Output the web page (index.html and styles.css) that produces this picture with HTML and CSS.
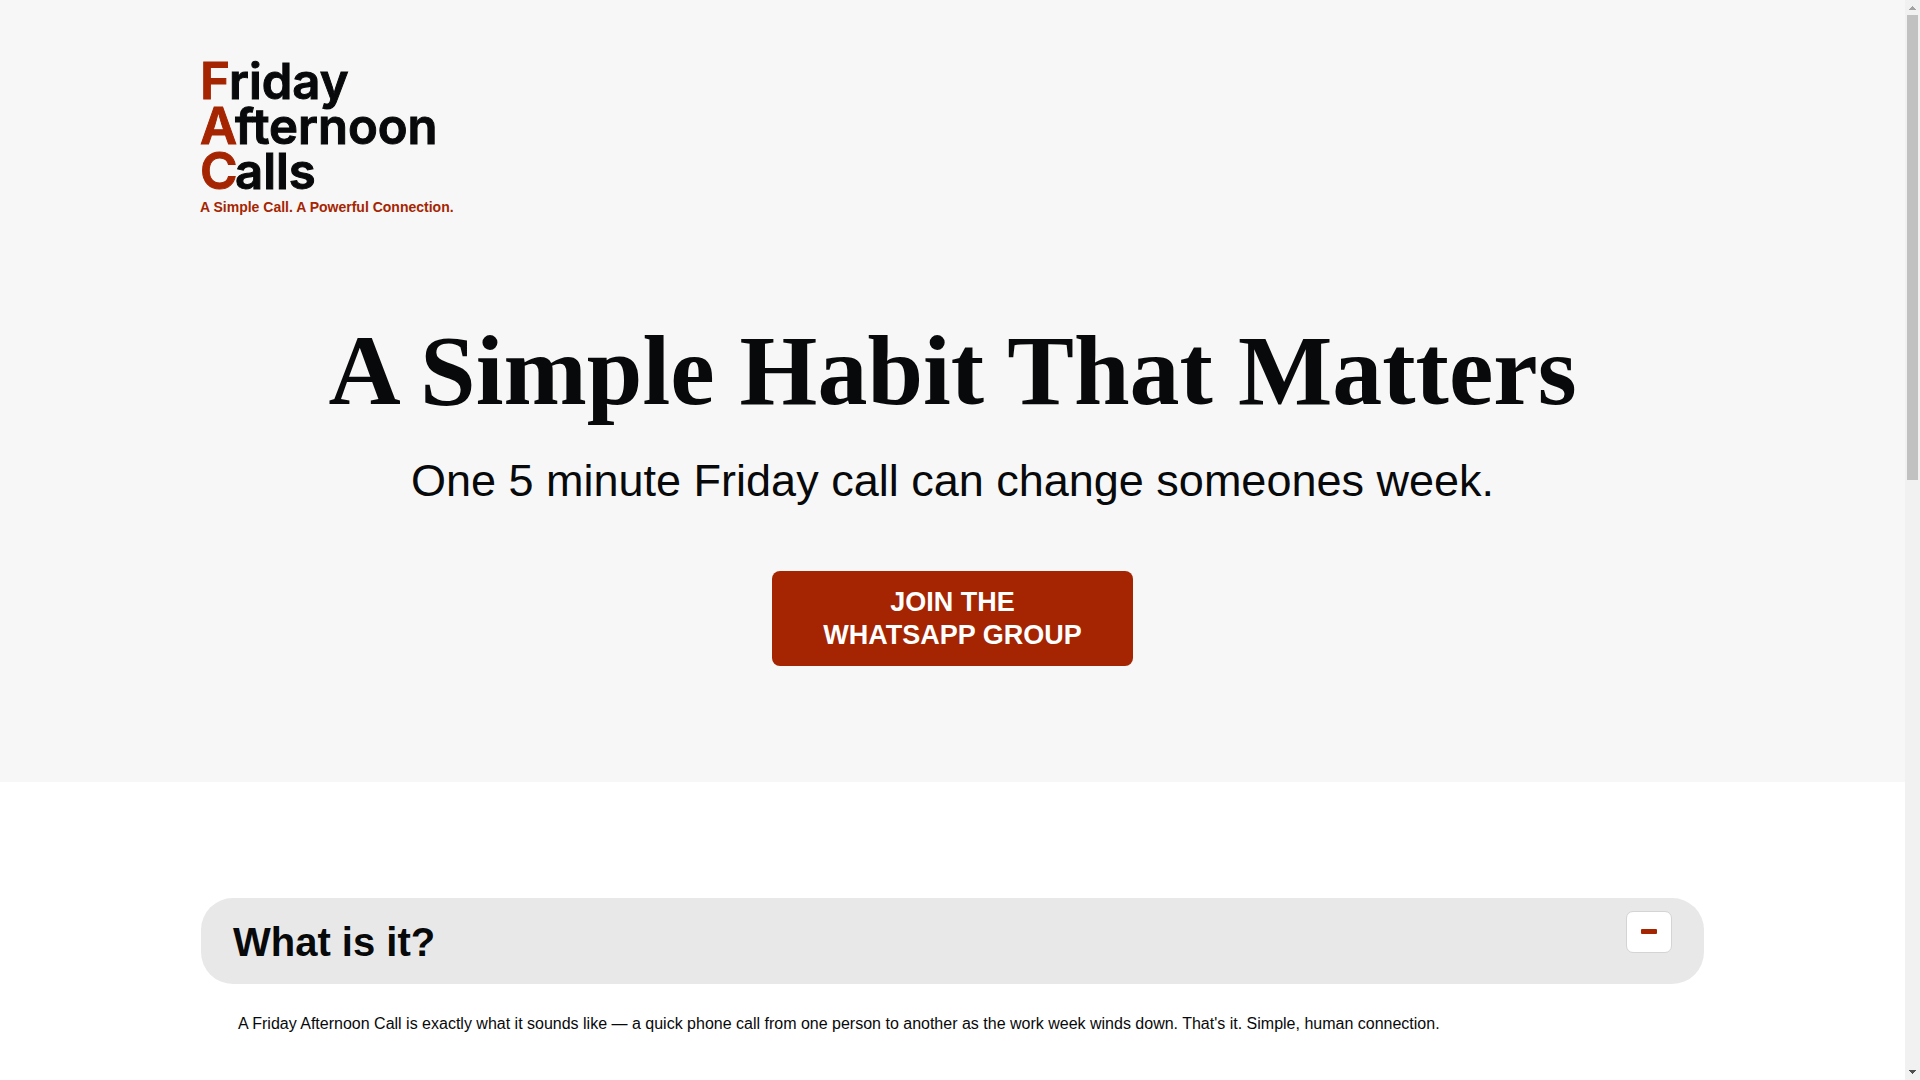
FILE: index.html
```html
<!DOCTYPE html>
<html lang="en">
<head>
<meta charset="utf-8">
<meta name="viewport" content="width=device-width, initial-scale=1">
<title>Friday Afternoon Calls</title>
<link rel="stylesheet" href="styles.css">
</head>
<body>
<div class="window">
  <div class="page">
    <header class="hero">
      <a class="logo" href="#" aria-label="Friday Afternoon Calls">
        <svg width="256" height="180" viewBox="0 -16 256 180">
          <g class="logo-name">
            <text y="43"><tspan class="initial" x="0">F</tspan><tspan x="29">riday</tspan></text>
            <text y="88"><tspan class="initial" x="0">A</tspan><tspan x="35">fternoon</tspan></text>
            <text y="133"><tspan class="initial" x="0">C</tspan><tspan x="35">alls</tspan></text>
          </g>
          <text class="logo-tagline" x="0" y="156">A Simple Call. A Powerful Connection.</text>
        </svg>
      </a>
      <div class="intro">
        <h1>A Simple Habit That Matters</h1>
        <p class="lead">One 5 minute Friday call can change someones week.</p>
        <a class="join" href="#">JOIN THE<br>WHATSAPP GROUP</a>
      </div>
    </header>
    <main class="content">
      <section class="panel">
        <div class="panel-head">
          <h2>What is it?</h2>
          <button class="toggle" type="button" aria-expanded="true" aria-label="Collapse What is it?">
            <svg width="16" height="5" viewBox="0 0 16 5"><rect width="16" height="5" rx="1" fill="#a52502"/></svg>
          </button>
        </div>
        <p class="panel-text">A Friday Afternoon Call is exactly what it sounds like — a quick phone call from one person to another as the work week winds down. That's it. Simple, human connection.</p>
      </section>
    </main>
  </div>
  <div class="scrollbar" aria-hidden="true">
    <svg class="arrow" width="15" height="15" viewBox="0 0 15 15"><path d="M7 6h1v1h1v1h1v1h1v1H4V9h1V8h1V7h1z" fill="#a3a3a3"/></svg>
    <div class="track"><div class="thumb"></div></div>
    <svg class="arrow" width="15" height="15" viewBox="0 0 15 15"><path d="M4 5h7v1h-1v1H9v1H8v1H7V8H6V7H5V6H4z" fill="#505050"/></svg>
  </div>
</div>
</body>
</html>
```
FILE: styles.css
```css
* { box-sizing: border-box; }

body {
  margin: 0;
  font-family: "Liberation Sans", Arial, sans-serif;
  color: #08090a;
  background: #fff;
}

h1, h2, p { margin: 0; }

.window {
  display: flex;
  height: 100vh;
  overflow: hidden;
}

.page {
  flex: 1;
  min-width: 0;
  overflow: hidden;
}

.hero {
  padding: 40px 200px 116px;
  background: #f7f7f7;
}

.logo, .logo svg { display: block; }
.logo { width: 256px; }

.logo-name {
  font: 600 49px Inter, sans-serif;
  fill: #08090a;
  stroke: #08090a;
  stroke-width: 1px;
}

.initial {
  font-size: 51px;
  fill: #a52502;
  stroke: #a52502;
}

.logo-tagline {
  font-size: 14px;
  font-weight: 700;
  fill: #a52502;
}

.intro {
  display: flex;
  flex-direction: column;
  align-items: center;
  padding-top: 101px;
  text-align: center;
}

h1 {
  font: 700 100px/100px "Liberation Serif", "Times New Roman", serif;
}

.lead {
  margin-top: 33px;
  font-size: 45px;
  line-height: 54px;
}

.join {
  margin-top: 63px;
  padding: 15px 51px 14px;
  border-radius: 8px;
  background: #a52502;
  color: #fff;
  font-size: 27px;
  font-weight: 700;
  line-height: 33px;
  text-decoration: none;
}

.content { padding: 116px 201px; }

.panel-head {
  display: flex;
  justify-content: space-between;
  align-items: flex-start;
  height: 86px;
  padding: 13px 32px;
  border-radius: 32px;
  background: #e8e8e8;
}

h2 {
  font-size: 40px;
  line-height: 62px;
}

.toggle {
  display: flex;
  justify-content: center;
  align-items: center;
  width: 46px;
  height: 42px;
  padding: 0 0 2px;
  border: 1px solid #d4d4d4;
  border-radius: 7px;
  background: #fff;
}

.panel-text {
  padding: 28px 37px;
  font-size: 16px;
  line-height: 24px;
}

.scrollbar {
  display: flex;
  flex-direction: column;
  width: 15px;
  background: #f1f1f1;
}

.arrow { display: block; }

.track {
  flex: 1;
  padding: 0 2px;
}

.thumb {
  height: 44.3%;
  background: #c1c1c1;
}
```
